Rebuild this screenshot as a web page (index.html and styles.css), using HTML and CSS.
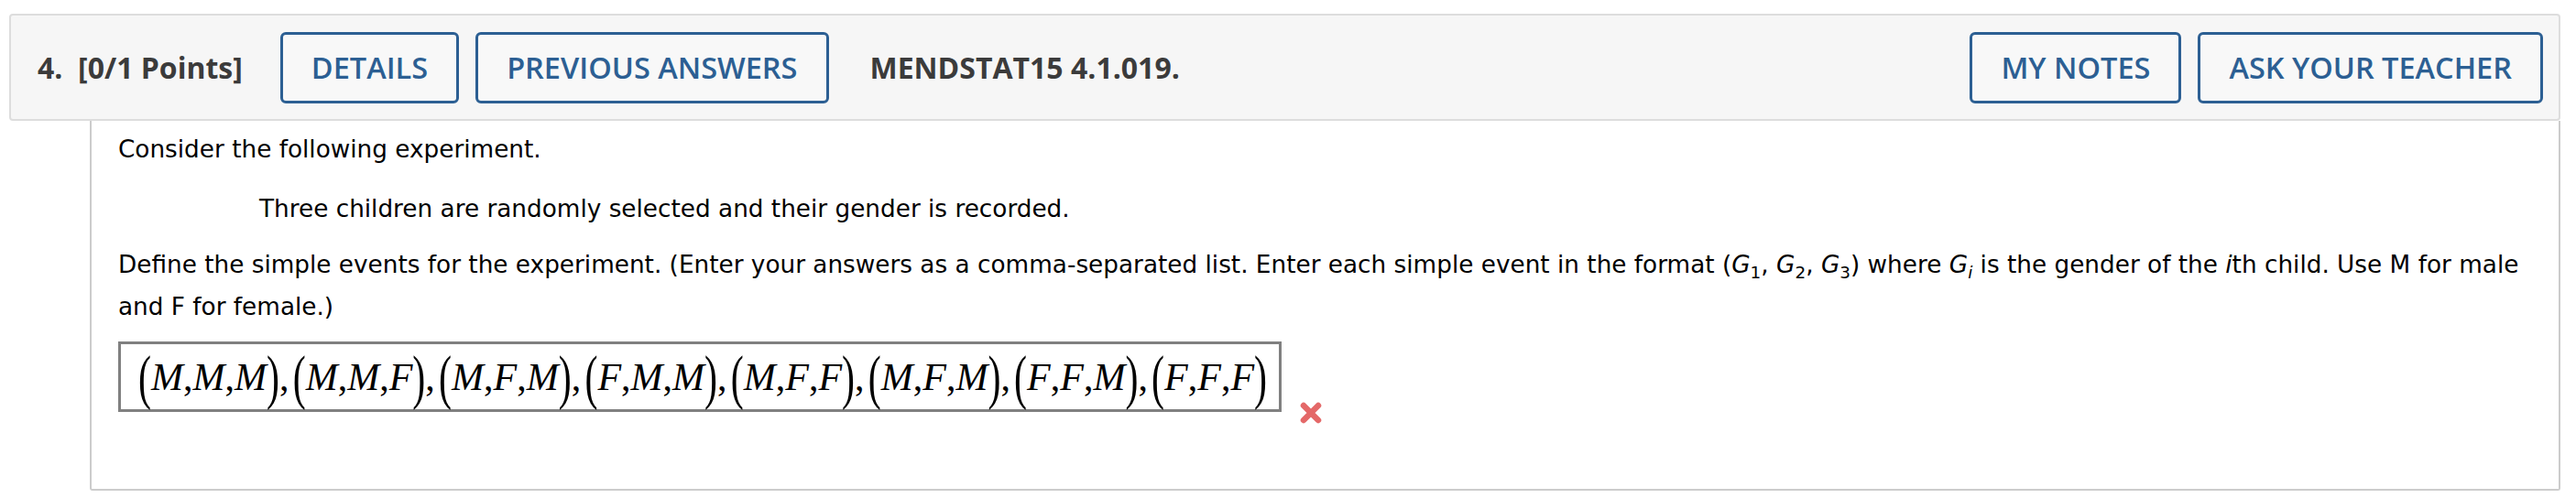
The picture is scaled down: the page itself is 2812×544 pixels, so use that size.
FILE: index.html
```html
<!DOCTYPE html>
<html>
<head>
<meta charset="utf-8">
<link rel="stylesheet" href="styles.css">
</head>
<body>
<div class="page">
  <div class="qhead">
    <span class="qnum">4.&nbsp; [0/1 Points]</span>
    <button class="btn">DETAILS</button>
    <button class="btn">PREVIOUS ANSWERS</button>
    <span class="qcode">MENDSTAT15 4.1.019.</span>
    <span class="spacer"></span>
    <button class="btn">MY NOTES</button>
    <button class="btn">ASK YOUR TEACHER</button>
  </div>
  <div class="qbody">
    <p class="p1">Consider the following experiment.</p>
    <p class="p2">Three children are randomly selected and their gender is recorded.</p>
    <p class="p3">Define the simple events for the experiment. (Enter your answers as a comma-separated list. Enter each simple event in the format (<i>G</i><sub>1</sub>, <i>G</i><sub>2</sub>, <i>G</i><sub>3</sub>) where <i>G<sub>i</sub></i> is the gender of the <i>i</i>th child. Use M for male and F for female.)</p>
    <div class="answer-row">
      <div class="answer"><span class="math"><span class="par">(</span><i>M</i>,<i>M</i>,<i>M</i><span class="par">)</span>,<span class="th"></span><span class="par">(</span><i>M</i>,<i>M</i>,<i>F</i><span class="par">)</span>,<span class="th"></span><span class="par">(</span><i>M</i>,<i>F</i>,<i>M</i><span class="par">)</span>,<span class="th"></span><span class="par">(</span><i>F</i>,<i>M</i>,<i>M</i><span class="par">)</span>,<span class="th"></span><span class="par">(</span><i>M</i>,<i>F</i>,<i>F</i><span class="par">)</span>,<span class="th"></span><span class="par">(</span><i>M</i>,<i>F</i>,<i>M</i><span class="par">)</span>,<span class="th"></span><span class="par">(</span><i>F</i>,<i>F</i>,<i>M</i><span class="par">)</span>,<span class="th"></span><span class="par">(</span><i>F</i>,<i>F</i>,<i>F</i><span class="par">)</span></span></div>
      <svg class="wrong" width="28" height="28" viewBox="0 0 28 28"><path d="M6 6 L22 22 M22 6 L6 22" stroke="#e46868" stroke-width="6.5" stroke-linecap="round"/></svg>
    </div>
  </div>
</div>
</body>
</html>
```
FILE: styles.css
```css
body {
  margin: 0;
  background: #ffffff;
}
.page {
  padding: 15px 17px 0 10px;
}
.qhead {
  display: flex;
  align-items: center;
  height: 117px;
  box-sizing: border-box;
  background: #f6f6f6;
  border: 2px solid #dddddd;
  border-radius: 4px;
  padding: 0 17px 0 29px;
  font-family: "Open Sans", sans-serif;
}
.qnum {
  font-weight: 700;
  font-size: 32px;
  color: #3b3b3b;
  margin-right: 41px;
}
.btn {
  height: 78px;
  box-sizing: border-box;
  border: 3px solid #2c5f93;
  border-radius: 6px;
  background: #f8f8f8;
  color: #2c5f93;
  font-family: "Open Sans", sans-serif;
  font-weight: 600;
  font-size: 32.5px;
  padding: 0 31px;
}
.btn + .btn {
  margin-left: 18px;
}
.qcode {
  margin-left: 45px;
  font-weight: 700;
  font-size: 32px;
  color: #3b3b3b;
}
.spacer {
  flex: 1;
}
.qbody {
  margin-left: 88px;
  border: 2px solid #cccccc;
  border-top: none;
  border-radius: 0 0 3px 3px;
  padding: 8px 24px 69px 29px;
  font-family: "DejaVu Sans", Verdana, sans-serif;
  font-size: 26.3px;
  line-height: 46px;
  color: #000000;
}
.qbody p {
  margin: 0;
}
.p2 {
  margin-top: 19px !important;
  padding-left: 154px;
}
.p3 {
  margin-top: 15px !important;
}
.p3 sub {
  font-size: 0.7em;
  line-height: 0;
  vertical-align: -0.3em;
}
.answer-row {
  display: flex;
  align-items: flex-start;
  margin-top: 15px;
}
.answer {
  height: 77px;
  box-sizing: border-box;
  border: 3px solid #808080;
  padding: 0 13px 0 19px;
  display: flex;
  align-items: center;
  font-family: "Liberation Serif", "Times New Roman", serif;
  font-size: 42px;
  line-height: 1;
}
.math i {
  font-style: italic;
}
.par {
  display: inline-block;
  transform: scaleY(1.55);
}
.th {
  display: inline-block;
  width: 0.1em;
}
.wrong {
  margin-left: 18px;
  margin-top: 64px;
}
```
